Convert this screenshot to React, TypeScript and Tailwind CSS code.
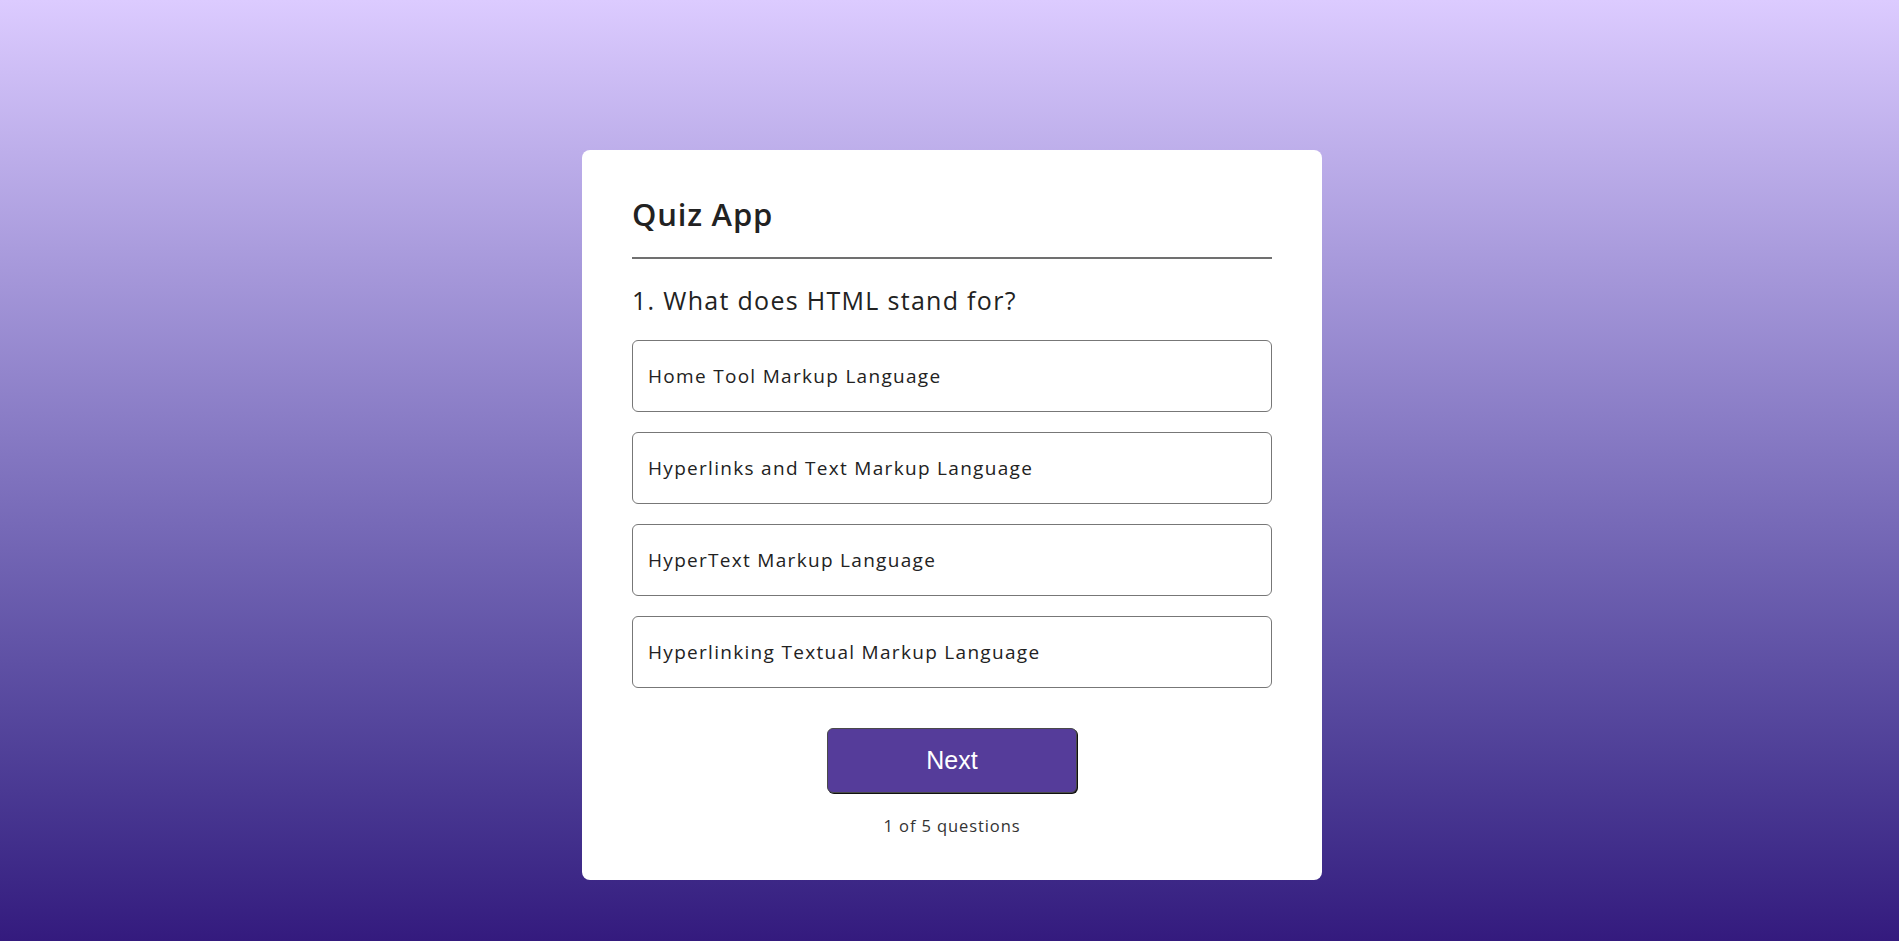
import React from "react";

const options = [
  "Home Tool Markup Language",
  "Hyperlinks and Text Markup Language",
  "HyperText Markup Language",
  "Hyperlinking Textual Markup Language",
];

export default function App() {
  return (
    <div
      className="min-h-[941px] w-full bg-gradient-to-b from-[#dccbff] to-[#341a7e] pt-[150px] pb-[61px] pl-[5px]"
      style={{ fontFamily: '"Open Sans", "Noto Sans", sans-serif' }}
    >
      <div className="mx-auto flex h-[730px] w-[740px] flex-col rounded-[8px] bg-white px-[50px] pt-[40px]">
        <h1 className="text-[31px] font-semibold leading-[48px] tracking-[0.8px] text-[#222]">Quiz App</h1>
        <div className="mt-[19px] h-[2px] w-full bg-[#707070]" />
        <h2 className="mt-[22px] text-[25px] leading-[38px] tracking-[1.3px] text-[#222]">1. What does HTML stand for?</h2>
        <ul className="mt-[21px] flex flex-col gap-[20px]">
          {options.map((o) => (
            <li
              key={o}
              className="flex h-[72px] items-center rounded-[6px] border border-[#777] pl-[15px] text-[19px] tracking-[1.3px] text-[#222]"
            >
              {o}
            </li>
          ))}
        </ul>
        <div className="mt-[40px] flex justify-center">
          <button
            className="h-[65px] w-[250px] rounded-[6px] border border-[#4a4a4a] bg-[#553c9a] text-[25px] text-white shadow-[1px_1px_0_#111]"
            style={{ fontFamily: '"Liberation Sans", Arial, sans-serif' }}
          >
            Next
          </button>
        </div>
        <p className="mt-[21px] text-center text-[16.5px] leading-[24px] tracking-[0.9px] text-[#333]">1 of 5 questions</p>
      </div>
    </div>
  );
}
